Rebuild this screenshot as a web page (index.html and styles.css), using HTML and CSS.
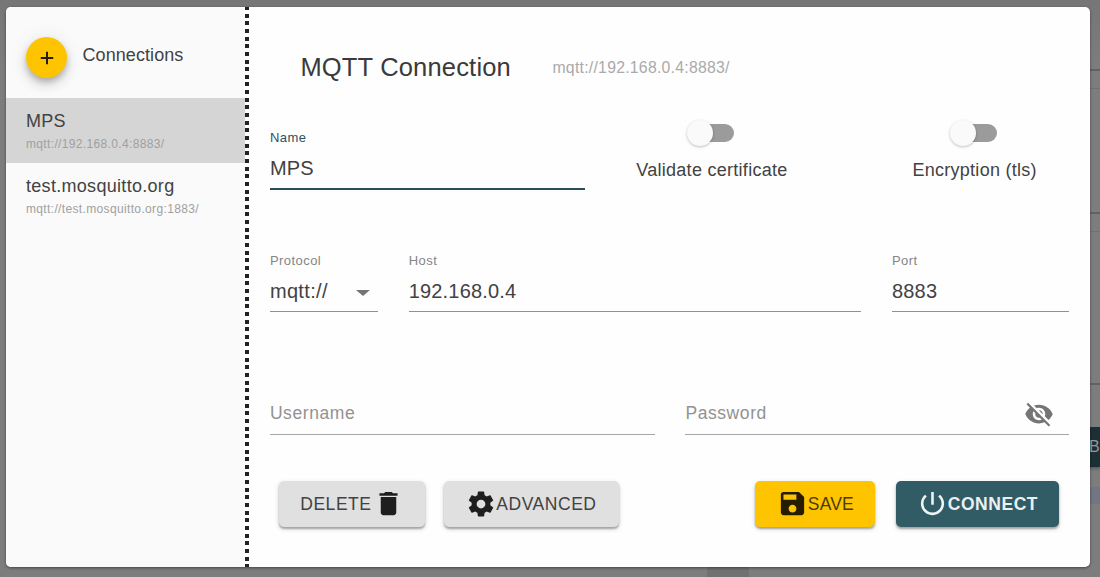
FILE: index.html
```html
<!DOCTYPE html>
<html lang="en">
<head>
<meta charset="utf-8">
<title>MQTT Connection</title>
<link rel="stylesheet" href="styles.css">
</head>
<body>
<div class="page">
  <div class="page-column">
    <div class="panel panel-first"></div>
    <div class="panel panel-second"><div class="panel-head"></div></div>
    <div class="panel panel-third"><div class="panel-head"></div></div>
    <div class="page-button">B</div>
    <div class="page-row"></div>
  </div>
  <div class="page-foot"></div>
</div>
<div class="dialog">
  <aside class="sidebar">
    <div class="sidebar-head">
      <button class="fab" aria-label="Add connection"><svg width="22" height="22" viewBox="0 0 24 24"><path d="M18.8 13.1h-5.7v5.7h-2.200v-5.700H5.200v-2.200h5.700V5.200h2.200v5.700h5.700z"/></svg></button>
      <div class="sidebar-title">Connections</div>
    </div>
    <div class="item item-active"><div class="item-name">MPS</div><div class="item-url">mqtt://192.168.0.4:8883/</div></div>
    <div class="item"><div class="item-name">test.mosquitto.org</div><div class="item-url">mqtt://test.mosquitto.org:1883/</div></div>
  </aside>
  <div class="divider"></div>
  <main class="main">
    <header class="header"><h1 class="title">MQTT Connection</h1><div class="title-url">mqtt://192.168.0.4:8883/</div></header>
    <div class="row row-name">
      <div class="field field-focused"><div class="label">Name</div><div class="value">MPS</div></div>
      <div class="toggle toggle-cert"><div class="switch"><div class="knob"></div></div><div class="toggle-label">Validate certificate</div></div>
      <div class="toggle toggle-tls"><div class="switch"><div class="knob"></div></div><div class="toggle-label">Encryption (tls)</div></div>
    </div>
    <div class="row row-host">
      <div class="field"><div class="label">Protocol</div><div class="value value-select">mqtt://<span class="caret"></span></div></div>
      <div class="field"><div class="label">Host</div><div class="value">192.168.0.4</div></div>
      <div class="field"><div class="label">Port</div><div class="value">8883</div></div>
    </div>
    <div class="row row-auth">
      <div class="field-empty">Username</div>
      <div class="field-empty">Password<svg class="eye" width="30" height="30" viewBox="0 0 24 24"><path d="M12 7c2.76 0 5 2.24 5 5 0 .65-.13 1.26-.36 1.83l2.92 2.92c1.51-1.26 2.7-2.89 3.43-4.75-1.73-4.39-6-7.5-11-7.5-1.4 0-2.74.25-3.98.7l2.16 2.16C10.74 7.13 11.35 7 12 7zM2 4.27l2.28 2.28.46.46C3.08 8.3 1.78 10.02 1 12c1.73 4.39 6 7.5 11 7.5 1.55 0 3.03-.3 4.38-.84l.42.42L19.73 22 21 20.73 3.27 3 2 4.27zM7.53 9.8l1.55 1.55c-.05.21-.08.43-.08.65 0 1.66 1.34 3 3 3 .22 0 .44-.03.65-.08l1.55 1.55c-.67.33-1.41.53-2.2.53-2.76 0-5-2.24-5-5 0-.79.2-1.53.53-2.2zm4.31-.78l3.15 3.15.02-.16c0-1.66-1.34-3-3-3l-.17.01z"/></svg></div>
    </div>
    <div class="actions">
      <button class="btn btn-delete"><span>DELETE</span><svg class="trash" width="31" height="31" viewBox="0 0 24 24"><path d="M6 19c0 1.100.9 2 2 2h8c1.100 0 2-.9 2-2V7H6v12zM19 4h-3.500l-1-1h-5l-1 1H5v2h14V4z"/></svg></button>
      <button class="btn btn-advanced"><svg width="30" height="30" viewBox="0 0 24 24"><path d="M12 15.5A3.5 3.5 0 0 1 8.5 12 3.5 3.5 0 0 1 12 8.500a3.5 3.5 0 0 1 3.500 3.500 3.500 3.500 0 0 1-3.500 3.500m7.430-2.530c.04-.32.07-.64.07-.97s-.03-.66-.07-1l2.110-1.630c.19-.15.24-.42.12-.64l-2-3.460c-.12-.22-.39-.31-.61-.22l-2.490 1c-.52-.39-1.060-.73-1.690-.98l-.37-2.650A.506.506 0 0 0 14 2h-4c-.25 0-.46.18-.5.42l-.37 2.650c-.63.25-1.170.59-1.690.98l-2.490-1c-.22-.09-.49 0-.61.22l-2 3.460c-.13.22-.07.49.12.64L4.570 11c-.04.34-.07.67-.07 1s.03.65.07.97l-2.110 1.660c-.19.15-.25.42-.12.64l2 3.460c.12.22.39.3.61.22l2.490-1.010c.52.4 1.060.74 1.690.99l.37 2.650c.04.24.25.42.5.42h4c.25 0 .46-.18.5-.42l.37-2.650c.63-.26 1.170-.59 1.690-.99l2.490 1.010c.22.08.49 0 .61-.22l2-3.460c.12-.22.07-.49-.12-.64z"/></svg><span>ADVANCED</span></button>
      <button class="btn btn-save"><svg width="31" height="31" viewBox="0 0 24 24"><path d="M17 3H5c-1.110 0-2 .9-2 2v14c0 1.100.89 2 2 2h14c1.100 0 2-.9 2-2V7l-4-4zm-5 16c-1.660 0-3-1.340-3-3s1.340-3 3-3 3 1.340 3 3-1.340 3-3 3zm3-10H5V5h10v4z"/></svg><span>SAVE</span></button>
      <button class="btn btn-connect"><svg width="31" height="31" viewBox="0 0 24 24"><path d="M13 3h-2v10h2V3zm4.830 2.170l-1.420 1.420C17.990 7.860 19 9.810 19 12c0 3.870-3.130 7-7 7s-7-3.130-7-7c0-2.190 1.010-4.140 2.580-5.420L6.170 5.170C4.230 6.820 3 9.260 3 12c0 4.970 4.030 9 9 9s9-4.030 9-9c0-2.740-1.230-5.180-3.170-6.830z"/></svg><span>CONNECT</span></button>
    </div>
  </main>
</div>
</body>
</html>
```
FILE: styles.css
```css
* { box-sizing: border-box; }
body { margin: 0; height: 577px; overflow: hidden; background: #7b7b7b; font-family: "Liberation Sans", Arial, sans-serif; color: #424242; }
button { font: inherit; border: 0; padding: 0; }

/* Dimmed page behind the dialog */
.page { height: 577px; display: grid; grid-template-columns: 707px 42px 1fr 50px; grid-template-rows: 567px 10px; background: linear-gradient(#767676, #7d7d7d 70px); }
.page-column { grid-column: 4; display: flex; flex-direction: column; }
.panel { border-bottom: 2px solid #626262; flex: none; }
.panel-first { height: 71px; }
.panel-second { height: 143px; }
.panel-third { height: 171px; }
.panel-head { height: 18px; border-bottom: 1px solid #717171; }
.page-button { height: 40px; margin-top: 42px; background: #1b2f34; color: #9a9a9a; font-size: 16px; line-height: 39px; padding-left: 39px; box-shadow: 0 2px 3px #5c5c5c; }
.page-row { height: 17px; margin-top: 20px; background: #727680; }
.page-foot { grid-row: 2; grid-column: 2; background: #717171; }

/* Dialog */
.dialog { position: absolute; left: 6px; top: 6.5px; width: 1083.5px; height: 560.5px; display: grid; grid-template-columns: 239.4px 4px 1fr; background: #fefefe; border-radius: 5px; overflow: hidden; box-shadow: 0 1px 3px rgba(0,0,0,.45); }
.sidebar { background: #fafafa; }
.sidebar-head { height: 91.5px; display: flex; padding: 30.5px 0 0 20px; gap: 15.5px; }
.fab { width: 41px; height: 41px; border-radius: 50%; background: #ffc400; display: grid; place-items: center; box-shadow: 0 4px 6px -1px rgba(0,0,0,.22), 0 7px 12px rgba(0,0,0,.13), 0 1px 20px rgba(0,0,0,.08); }
.fab svg { fill: #261d00; }
.sidebar-title { font-size: 18px; line-height: 22px; letter-spacing: .08px; padding-top: 6.5px; }
.item { height: 65px; padding: 12px 20px 0; }
.item-active { background: #d5d5d5; }
.item-name { font-size: 18px; line-height: 23px; letter-spacing: .3px; }
.item-url { font-size: 12px; line-height: 15px; margin-top: 4px; letter-spacing: .35px; color: #a0a0a0; }
.divider { background: repeating-linear-gradient(#222 0 4px, transparent 4px 7.647px) 0 -1px / 100% 600px; }
.main { padding: 0 20.5px; }
.header { height: 117px; display: flex; align-items: center; gap: 41.5px; padding: 5px 0 0 30.5px; }
.title { margin: 0; font-size: 25.5px; font-weight: 400; letter-spacing: .18px; color: #3a3a3a; }
.title-url { font-size: 15.8px; letter-spacing: .25px; color: #aaa; }
.row { display: grid; }
.row-name { height: 124px; grid-template-columns: 315px 242px 1fr; align-items: start; }
.field { height: 65px; padding-top: 6px; border-bottom: 1px solid #919191; }
.field-focused { height: 66px; border-bottom: 2px solid #294e58; }
.label { font-size: 13px; line-height: 16px; letter-spacing: .45px; color: #858585; }
.field-focused .label { color: #2f525c; }
.value { font-size: 20px; line-height: 24px; margin-top: 10.5px; letter-spacing: .18px; }
.value-select { display: flex; align-items: center; justify-content: space-between; padding-right: 8px; letter-spacing: .35px; }
.caret { border: 7px solid transparent; border-top: 6px solid #757575; border-bottom: 0; margin-top: 3px; }
.toggle { display: flex; flex-direction: column; align-items: center; }
.toggle-cert { padding-left: 12px; }
.toggle-tls { padding-left: 53px; }
.switch { width: 44px; height: 18px; background: #9b9b9b; border-radius: 9px; display: flex; align-items: center; }
.knob { flex: none; width: 26px; height: 26px; margin-left: -3px; border-radius: 50%; background: #fafafa; box-shadow: 0 1px 3px rgba(0,0,0,.25); }
.toggle-label { font-size: 18px; line-height: 22px; letter-spacing: .28px; margin-top: 17px; white-space: nowrap; }
.row-host { height: 157px; grid-template-columns: 108px 452.5px 177px; gap: 30.8px; align-items: start; }
.row-host .field { height: 64px; padding-top: 5px; }
.row-auth { grid-template-columns: 385px 384px; gap: 30.5px; }
.field-empty { height: 30px; display: flex; justify-content: space-between; border-bottom: 1px solid #a6a6a6; font-size: 17.5px; line-height: 17px; letter-spacing: .58px; color: #929292; }
.eye { margin: -6px 15px 0 0; fill: #757575; }
.actions { display: flex; margin: 46px 0 0 9px; }
.btn { height: 46px; border-radius: 5px; display: flex; align-items: center; justify-content: center; background: #e0e0e0; box-shadow: 0 2px 2px rgba(0,0,0,.27), 0 2px 5px rgba(0,0,0,.16); font-size: 17.5px; line-height: 24px; letter-spacing: .55px; color: #424242; }
.btn svg { flex: none; fill: #1e1e1e; }
.btn .trash { margin-left: 1px; }
.btn span { padding-top: 1px; }
.btn-delete { width: 146px; }
.btn-advanced { width: 175px; margin-left: 19px; }
.btn-save { width: 120px; margin-left: auto; background: #ffc400; color: #4b3b07; letter-spacing: .2px; }
.btn-save svg { fill: #261d00; }
.btn-connect { width: 163px; margin: 0 10.5px 0 20.5px; background: #315c65; color: #eaf0f1; font-weight: 700; }
.btn-connect svg { fill: #eef3f3; }
```
